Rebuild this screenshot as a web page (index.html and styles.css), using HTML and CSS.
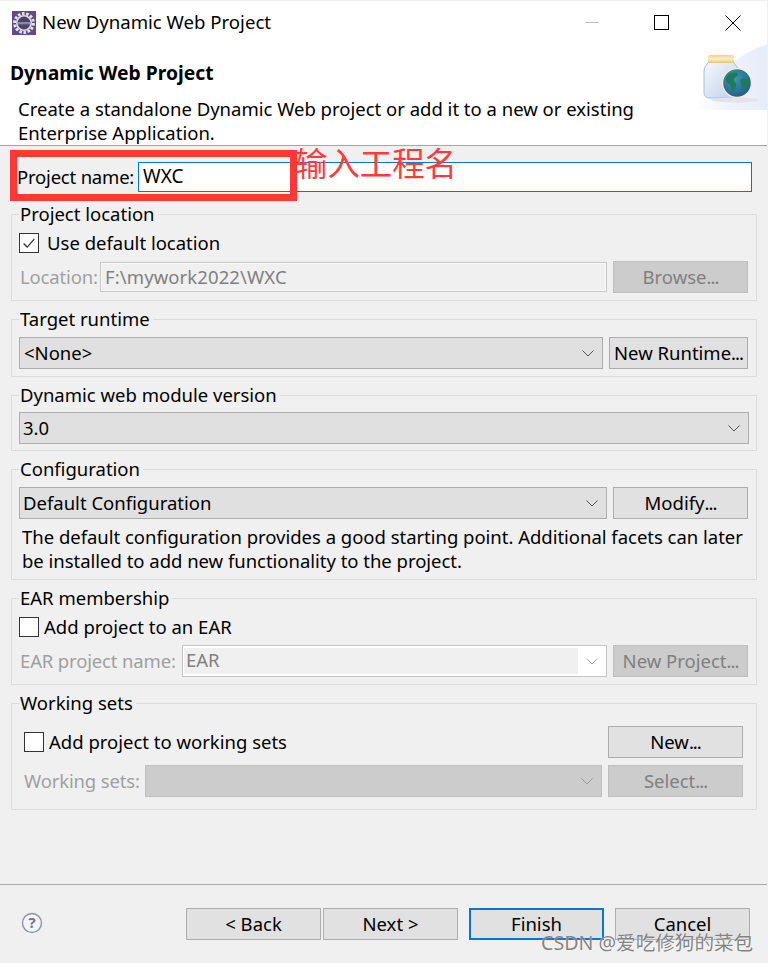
FILE: index.html
```html
<!DOCTYPE html>
<html lang="en">
<head>
<meta charset="utf-8">
<title>New Dynamic Web Project</title>
<link rel="stylesheet" href="styles.css">
</head>
<body>
<div class="window">
  <header class="titlebar">
    <svg class="app-icon" viewBox="0 0 24 24" width="24" height="24">
      <rect width="24" height="24" fill="#5f4a8c"/>
      <circle cx="12" cy="12" r="9.4" fill="none" stroke="#e4e4e4" stroke-width="3" stroke-dasharray="2.6 1.6"/>
      <circle cx="12" cy="12" r="8" fill="#dcdcdc"/>
      <circle cx="12" cy="12" r="6.4" fill="#4b4468"/>
      <rect x="5.8" y="11" width="12.4" height="2.4" fill="#8d88a6"/>
    </svg>
    <span class="title">New Dynamic Web Project</span>
    <div class="win-controls">
      <svg class="win-btn" viewBox="0 0 16 16" width="16" height="16"><path d="M2 7.5h14" stroke="#bdbdbd" fill="none"/></svg>
      <svg class="win-btn" viewBox="0 0 16 16" width="16" height="16"><rect x="0.5" y="0.5" width="14" height="14" fill="none" stroke="#000"/></svg>
      <svg class="win-btn" viewBox="0 0 16 16" width="16" height="16"><path d="M0.5 0.5l15 15M15.5 0.5l-15 15" stroke="#000" fill="none"/></svg>
    </div>
  </header>
  <section class="banner">
    <h1>Dynamic Web Project</h1>
    <p>Create a standalone Dynamic Web project or add it to a new or existing<br>Enterprise Application.</p>
    <div class="banner-art">
      <svg viewBox="0 0 78 70" width="78" height="70">
        <defs>
          <linearGradient id="bg" x1="0" y1="0" x2="1" y2="0"><stop offset="0" stop-color="#ffffff"/><stop offset="0.6" stop-color="#eef1fb"/><stop offset="1" stop-color="#e8ecf9"/></linearGradient>
          <linearGradient id="lid" x1="0" y1="0" x2="0" y2="1"><stop offset="0" stop-color="#efd27e"/><stop offset="0.5" stop-color="#fbf0c4"/><stop offset="1" stop-color="#e7c76c"/></linearGradient>
          <linearGradient id="jar" x1="0" y1="0" x2="1" y2="1"><stop offset="0" stop-color="#f7f9fd"/><stop offset="1" stop-color="#bcd0ea"/></linearGradient>
          <radialGradient id="globe" cx="0.4" cy="0.35" r="0.7"><stop offset="0" stop-color="#3d9ab0"/><stop offset="1" stop-color="#1d5c8c"/></radialGradient>
        </defs>
        <path d="M78 5C50 10 25 40 4 70H78Z" fill="url(#bg)"/>
        <path d="M20 22h24c3 3 5 5 5 10v20c0 4-2 6-6 6H21c-4 0-6-2-6-6V32c0-5 2-7 5-10Z" fill="url(#jar)" stroke="#a9bcd8"/>
        <rect x="19" y="15" width="26" height="8" rx="2.5" fill="url(#lid)"/>
        <ellipse cx="46" cy="60" rx="24" ry="2.5" fill="#e2e4e9"/>
        <circle cx="48" cy="43" r="14.5" fill="url(#globe)" stroke="#f3eecb" stroke-width="1.4"/>
        <path d="M39 35c4-3 9-3 10-1 0 3-4 3-4 6 0 2 3 3 2 6-1 4-3 6-4 5-1-3-1-6-3-7-2-1-3-3-3-5 0-2 1-3 2-4ZM52 39c3-1 7 0 9 2 0 3-1 5-3 5s-2 4-4 4c-1-3-1-5-2-6-1-2-1-4 0-5Z" fill="#1f7a5a"/>
      </svg>
    </div>
  </section>
  <main class="content">
    <div class="row name-row">
      <label class="name-label">Project name:</label>
      <div class="name-input">WXC</div>
    </div>
    <section class="group group-location">
      <div class="legend">Project location</div>
      <div class="check-row gap-wide"><span class="check"><svg viewBox="0 0 20 20" width="18" height="18"><path d="M4 10.5l4 4 8-9" fill="none" stroke="#333" stroke-width="1.4"/></svg></span><span class="check-label">Use default location</span></div>
      <div class="row">
        <label class="dim label-loc">Location:</label>
        <div class="field disabled">F:\mywork2022\WXC</div>
        <button class="btn disabled">Browse<span class="dots">...</span></button>
      </div>
    </section>
    <section class="group group-runtime">
      <div class="legend">Target runtime</div>
      <div class="row">
        <div class="combo"><span class="combo-text none-text">&lt;None&gt;</span><svg class="chev" viewBox="0 0 12 7" width="12" height="7"><path d="M0.5 0.5L6 6l5.5-5.5" fill="none" stroke="#555"/></svg></div>
        <button class="btn wide">New Runtime<span class="dots">...</span></button>
      </div>
    </section>
    <section class="group group-version">
      <div class="legend">Dynamic web module version</div>
      <div class="combo"><span class="combo-text">3.0</span><svg class="chev" viewBox="0 0 12 7" width="12" height="7"><path d="M0.5 0.5L6 6l5.5-5.5" fill="none" stroke="#555"/></svg></div>
    </section>
    <section class="group group-config">
      <div class="legend">Configuration</div>
      <div class="row">
        <div class="combo"><span class="combo-text">Default Configuration</span><svg class="chev" viewBox="0 0 12 7" width="12" height="7"><path d="M0.5 0.5L6 6l5.5-5.5" fill="none" stroke="#555"/></svg></div>
        <button class="btn">Modify<span class="dots">...</span></button>
      </div>
      <p class="note">The default configuration provides a good starting point. Additional facets can later<br>be installed to add new functionality to the project.</p>
    </section>
    <section class="group group-ear">
      <div class="legend">EAR membership</div>
      <div class="check-row"><span class="check"></span><span class="check-label">Add project to an EAR</span></div>
      <div class="row">
        <label class="dim label-ear">EAR project name:</label>
        <div class="ear-combo"><span class="ear-text">EAR</span><span class="ear-arrow"><svg class="chev" viewBox="0 0 12 7" width="12" height="7"><path d="M0.5 0.5L6 6l5.5-5.5" fill="none" stroke="#aaa"/></svg></span></div>
        <button class="btn disabled">New Project<span class="dots">...</span></button>
      </div>
    </section>
    <section class="group group-sets">
      <div class="legend">Working sets</div>
      <div class="row">
        <div class="check-row"><span class="check"></span><span class="check-label">Add project to working sets</span></div>
        <button class="btn">New<span class="dots">...</span></button>
      </div>
      <div class="row">
        <label class="dim label-sets">Working sets:</label>
        <div class="combo disabled"><span></span><svg class="chev" viewBox="0 0 12 7" width="12" height="7"><path d="M0.5 0.5L6 6l5.5-5.5" fill="none" stroke="#9a9a9a"/></svg></div>
        <button class="btn disabled">Select<span class="dots">...</span></button>
      </div>
    </section>
  </main>
  <footer class="footer">
    <svg class="help" viewBox="0 0 22 22" width="22" height="22"><circle cx="11" cy="11" r="9.5" fill="#f4f5f8" stroke="#8a93a8" stroke-width="1.4"/><text x="11" y="16" text-anchor="middle" class="help-q">?</text></svg>
    <div class="footer-btns">
      <button class="btn">&lt; Back</button>
      <button class="btn">Next &gt;</button>
      <button class="btn primary">Finish</button>
      <button class="btn">Cancel</button>
    </div>
  </footer>
</div>
<div class="annot-box"></div>
<div class="annot-text">输入工程名</div>
<div class="watermark">CSDN @爱吃修狗的菜包</div>
</body>
</html>
```
FILE: styles.css
```css
* { box-sizing: border-box; }
html, body { margin: 0; padding: 0; }
body {
  width: 768px; height: 963px; overflow: hidden; position: relative;
  font-family: "Noto Sans", "Noto Sans CJK SC", sans-serif;
  font-size: 18.5px; color: #000; background: #f0f0f0;
}
.window { height: 963px; display: flex; flex-direction: column; }
.titlebar {
  height: 45px; width: 767px; background: #fff; display: flex; align-items: center; flex: none;
  border-top: 1px solid #f0f0f0;
  padding: 0 26px 0 12px; gap: 6px; font-size: 18.6px;
}
.title { line-height: 44px; margin-bottom: 2px; }
.win-controls { margin-left: auto; display: flex; gap: 55px; align-items: center; }
.banner { height: 101px; flex: none; width: 767px; background: #fff; border-bottom: 1px solid #a8a8a8; position: relative; padding: 0 0 0 10px; }
.banner h1 { margin: 0; font-size: 19.3px; font-weight: 700; line-height: 28px; padding-top: 14px; }
.banner p { margin: 0; padding: 10px 0 0 8px; line-height: 24px; }
.banner-art { position: absolute; right: 0; top: -5px; height: 70px; }
.content { flex: 1; }
.row { display: flex; align-items: center; }
.name-row { padding: 16px 16px 0 16px; margin-bottom: 22px; }
.name-label { width: 122px; flex: none; white-space: nowrap; letter-spacing: -0.2px; margin-bottom: 2px; padding-left: 1px; }
.name-input { flex: 1; height: 30px; background: #fff; border: 1px solid #0078d7; padding-left: 4px; line-height: 27px; font-size: 19px; }
.group { margin: 0 11px 18px; border: 1px solid #dcdcdc; padding: 0 8px 7px 7px; }
.legend { margin: -12px 0 0 0; width: fit-content; height: 24px; padding: 0 3px 0 1px; line-height: 22px; background: #f0f0f0; white-space: nowrap; }
.group .row { gap: 6px; }
.group-location .check-row { margin-top: 6px; }
.group-location .row { margin-top: 8px; }
.group-runtime .row { margin-top: 5px; }
.group-version { padding: 0 7px 6px; }
.group-version .combo { margin-top: 4px; }
.group-config { padding-bottom: 6px; }
.group-config .row { margin-top: 5px; }
.group-ear .check-row { margin-top: 6px; }
.group-ear .row { margin-top: 8px; }
.group-sets { padding: 0 13px 12px 12px; margin-bottom: 0; }
.group-sets .legend { margin-left: -5px; }
.group-sets .row:nth-of-type(2) { margin-top: 10px; }
.group-sets .row:nth-of-type(3) { margin-top: 7px; }
.group-sets .check-row { flex: 1; }
.group-sets .row { height: 32px; }
.check-row { display: flex; align-items: center; gap: 5px; height: 20px; }
.check-row.gap-wide { gap: 8px; }
.check-label { margin-bottom: 2px; }
.check { width: 20px; height: 20px; flex: none; background: #fff; border: 1px solid #333; display: flex; align-items: center; justify-content: center; }
.dim { color: #a0a0a0; white-space: nowrap; flex: none; letter-spacing: -0.15px; margin-bottom: 2px; }
.label-loc { width: 76px; margin-right: -1px; padding-left: 1px; }
.label-ear { width: 158px; margin-right: -1px; padding-left: 1px; }
.label-sets { width: 115px; }
.field { flex: 1; height: 30px; border: 1px solid #c8c8c8; padding-left: 4px; line-height: 27px; letter-spacing: 0.1px; }
.field.disabled { color: #808080; background: #f0f0f0; box-shadow: inset 0 0 0 1px #fafafa; }
.combo { flex: 1; height: 32px; background: #e0e0e0; border: 1px solid #adadad; display: flex; align-items: center; justify-content: space-between; padding: 0 8px 0 3px; }
.combo-text { margin-bottom: 2px; }
.none-text { padding-left: 1px; }
.combo.disabled { background: #cccccc; border-color: #c0c0c0; }
.ear-combo { flex: 1; height: 32px; background: #fff; border: 1px solid #c4c4c4; display: flex; padding: 2px 0 2px 1px; }
.ear-text { flex: 1; background: #f0f0f0; color: #808080; line-height: 24px; padding-left: 2px; }
.ear-arrow { width: 28px; display: flex; align-items: center; justify-content: center; }
.btn {
  font: inherit; width: 135px; height: 32px; padding: 0; background: #e1e1e1; white-space: nowrap;
  border: 1px solid #adadad; color: #000; line-height: 28px; flex: none;
}
.btn.wide { width: 139px; }
.dots { letter-spacing: -1px; }
.btn.disabled { background: #cccccc; border-color: #bfbfbf; color: #808080; }
.btn.primary { border: 2px solid #0078d7; }
.note { margin: 6px 0 0 3px; line-height: 24px; white-space: nowrap; letter-spacing: -0.02px; }
.footer { height: 79px; flex: none; width: 767px; border-top: 1px solid #a8a8a8; display: flex; padding: 23px 17px 0 21px; position: relative; }
.help { margin-top: 4px; }
.help-q { font-size: 15px; font-weight: 700; fill: #6b7690; font-family: "Noto Sans", sans-serif; }
.footer-btns { margin-left: auto; display: flex; gap: 2px; }
.footer-btns .btn.primary { margin-left: 9px; margin-right: 9px; }
.annot-box { position: absolute; left: 10px; top: 150px; width: 287px; height: 51px; border: 7px solid #ff3737; }
.annot-text { position: absolute; left: 295px; top: 142px; font-family: "Noto Sans CJK SC", sans-serif; font-size: 32.4px; color: #ff3b3b; line-height: 40px; }
.watermark { position: absolute; left: 541px; top: 930px; font-family: "Noto Sans", "Noto Sans CJK SC", sans-serif; font-size: 19.6px; color: rgba(90,90,90,0.75); line-height: 26px; text-shadow: 0 0 1px #fff; white-space: nowrap; }
```
